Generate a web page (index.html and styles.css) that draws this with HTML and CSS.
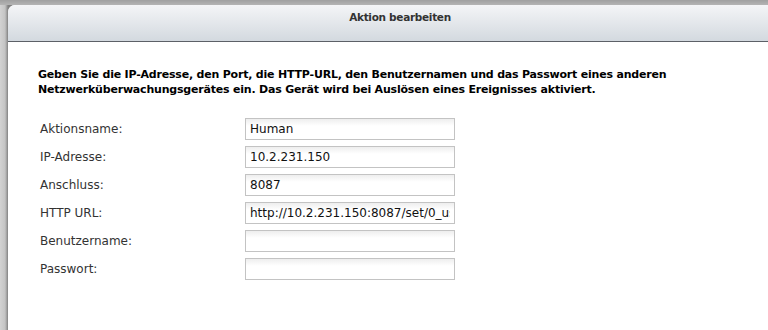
FILE: index.html
```html
<!DOCTYPE html>
<html lang="de">
<head>
  <meta charset="UTF-8">
  <title>Aktion bearbeiten</title>
  <link rel="stylesheet" href="styles.css">
</head>
<body>
  <div class="backdrop">
    <div class="dialog">
      <div class="dialog-header">Aktion bearbeiten</div>
      <div class="dialog-body">
        <p class="intro">Geben Sie die IP-Adresse, den Port, die HTTP-URL, den Benutzernamen und das Passwort eines anderen Netzwerküberwachungsgerätes ein. Das Gerät wird bei Auslösen eines Ereignisses aktiviert.</p>

        <form class="action-form">
          <div class="form-row">
            <label for="name">Aktionsname:</label>
            <input type="text" id="name" value="Human">
          </div>
          <div class="form-row">
            <label for="ip">IP-Adresse:</label>
            <input type="text" id="ip" value="10.2.231.150">
          </div>
          <div class="form-row">
            <label for="port">Anschluss:</label>
            <input type="text" id="port" value="8087">
          </div>
          <div class="form-row">
            <label for="url">HTTP URL:</label>
            <input type="text" id="url" value="http://10.2.231.150:8087/set/0_userdata.0.human">
          </div>
          <div class="form-row">
            <label for="user">Benutzername:</label>
            <input type="text" id="user" value="">
          </div>
          <div class="form-row">
            <label for="pass">Passwort:</label>
            <input type="password" id="pass" value="">
          </div>
        </form>
      </div>
    </div>
  </div>
</body>
</html>
```

FILE: styles.css
```css
* {
  margin: 0;
  padding: 0;
  box-sizing: border-box;
}

body {
  width: 768px;
  height: 330px;
  overflow: hidden;
  font-family: 'DejaVu Sans', Verdana, sans-serif;
  font-size: 12px;
  color: #333;
}

.backdrop {
  height: 100%;
  padding: 5px 0 0 8px;
  background:
    linear-gradient(to bottom, #a0a0a0 0, #b4b4b4 5px, transparent 5px),
    linear-gradient(to right, #d2d2d2 0, #c4c4c4 5px, #9a9a9a 7px, #808080 8px);
}

.dialog {
  width: 784px;
  height: 100%;
  background-color: white;
  border-top-left-radius: 7px;
  overflow: hidden;
}

.dialog-header {
  height: 37px;
  padding-top: 6px;
  text-align: center;
  font-size: 10.5px;
  letter-spacing: -0.3px;
  font-weight: bold;
  color: #333;
  background: linear-gradient(to bottom, #f4f5f7, #d3d9df);
  border-bottom: 1px solid #5c6067;
}

.dialog-body {
  padding: 25px 0 0 30px;
}

.intro {
  width: 660px;
  font-size: 11px;
  letter-spacing: -0.2px;
  font-weight: bold;
  color: #000;
  line-height: 15px;
}

.action-form {
  margin-top: 18px;
}

.form-row {
  display: flex;
  align-items: center;
  height: 28px;
  padding-left: 2px;
}

.form-row label {
  width: 205px;
  color: #333;
}

.form-row input {
  width: 210px;
  height: 22px;
  padding: 0 4px;
  border: 1px solid #c3c3c3;
  background: linear-gradient(to bottom, #eeeeee, #ffffff 7px);
  font-family: 'DejaVu Sans', Verdana, sans-serif;
  font-size: 12px;
  color: #111;
  outline: none;
}
```
